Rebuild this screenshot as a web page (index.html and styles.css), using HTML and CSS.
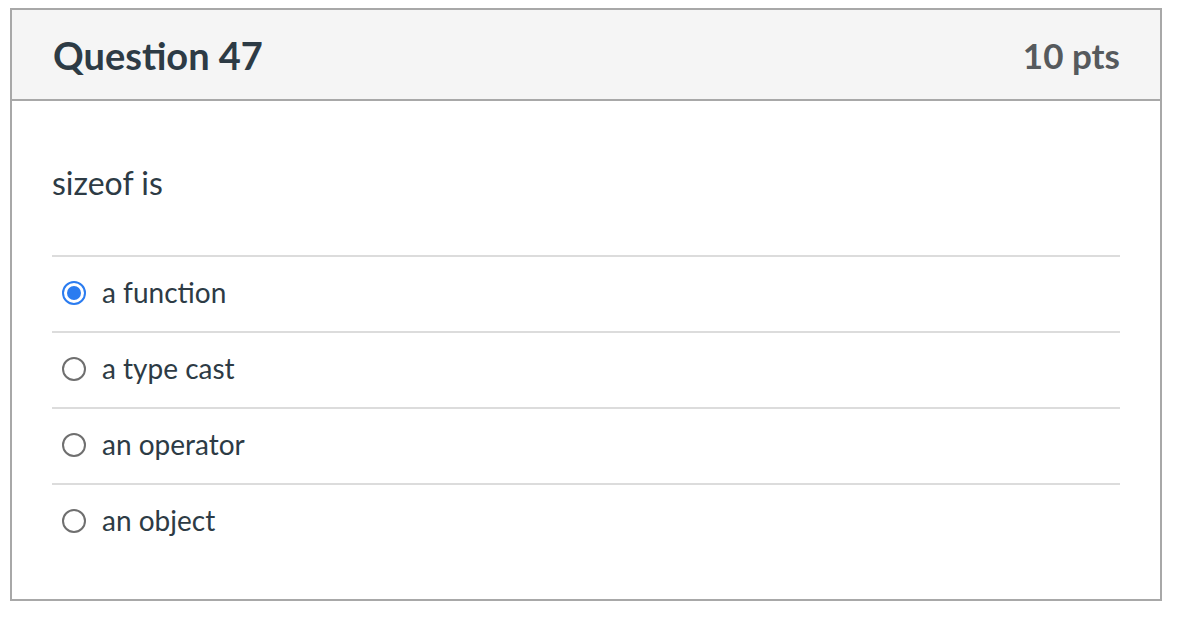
FILE: index.html
```html
<!DOCTYPE html>
<html lang="en">
<head>
<meta charset="utf-8">
<title>Question 47</title>
<link rel="stylesheet" href="styles.css">
</head>
<body>
<div class="question">
  <div class="header">
    <span class="name">Question 47</span>
    <span class="points">10 pts</span>
  </div>
  <div class="content">
    <div class="text">sizeof is</div>
    <div class="answers">
      <label class="answer">
        <span class="radio checked"><span class="dot"></span></span>
        <span class="label">a function</span>
      </label>
      <label class="answer">
        <span class="radio"></span>
        <span class="label">a type cast</span>
      </label>
      <label class="answer">
        <span class="radio"></span>
        <span class="label">an operator</span>
      </label>
      <label class="answer">
        <span class="radio"></span>
        <span class="label">an object</span>
      </label>
    </div>
  </div>
</div>
</body>
</html>
```

FILE: styles.css
```css
html, body {
  margin: 0;
  padding: 0;
  background: #ffffff;
}

body {
  font-family: Lato, "Liberation Sans", sans-serif;
  color: #2d3b45;
}

.question {
  box-sizing: border-box;
  width: 1152px;
  margin: 8px 0 0 10px;
  border: 2px solid #a8a8a8;
}

.header {
  box-sizing: border-box;
  background: #f5f5f5;
  border-bottom: 2px solid #a8a8a8;
  height: 91px;
  padding: 0 40px 0 41px;
  display: flex;
  align-items: center;
  justify-content: space-between;
}

.name {
  font-size: 38px;
  font-weight: 700;
  color: #2d3b45;
}

.points {
  font-size: 35px;
  font-weight: 700;
  color: #565a5d;
}

.content {
  padding: 62px 40px 40px 40px;
}

.text {
  font-size: 32px;
  line-height: 40px;
  margin-bottom: 52px;
}

.answer {
  display: flex;
  align-items: center;
  height: 74px;
  border-top: 2px solid #dcdcdc;
  font-size: 28px;
}

.radio {
  box-sizing: border-box;
  width: 24px;
  height: 24px;
  border-radius: 50%;
  border: 2px solid #6f6f6f;
  margin-left: 10px;
  margin-right: 16px;
  margin-bottom: 2px;
  display: flex;
  align-items: center;
  justify-content: center;
}

.radio.checked {
  border-color: #2b7cf0;
}

.dot {
  width: 14px;
  height: 14px;
  border-radius: 50%;
  background: #2b7cf0;
}

.label {
  color: #2d3b45;
  margin-bottom: 4px;
}
```
